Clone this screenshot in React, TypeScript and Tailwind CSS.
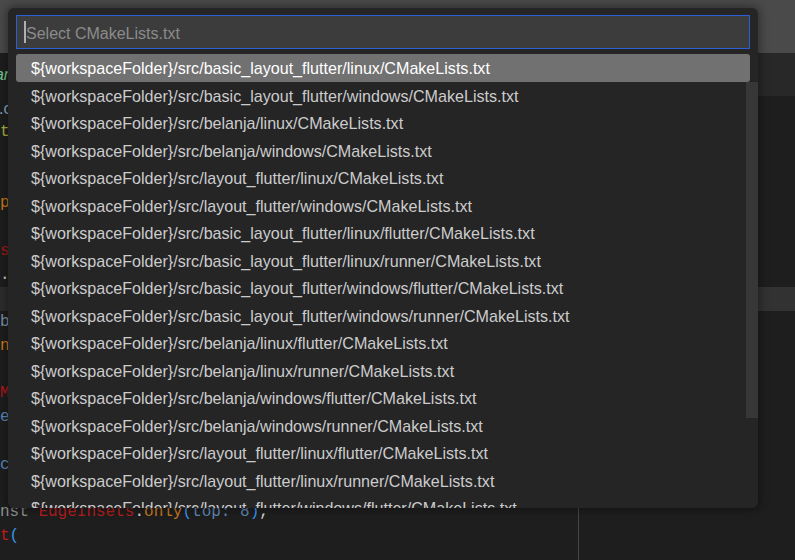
import React from "react";

const items = [
  "${workspaceFolder}/src/basic_layout_flutter/linux/CMakeLists.txt",
  "${workspaceFolder}/src/basic_layout_flutter/windows/CMakeLists.txt",
  "${workspaceFolder}/src/belanja/linux/CMakeLists.txt",
  "${workspaceFolder}/src/belanja/windows/CMakeLists.txt",
  "${workspaceFolder}/src/layout_flutter/linux/CMakeLists.txt",
  "${workspaceFolder}/src/layout_flutter/windows/CMakeLists.txt",
  "${workspaceFolder}/src/basic_layout_flutter/linux/flutter/CMakeLists.txt",
  "${workspaceFolder}/src/basic_layout_flutter/linux/runner/CMakeLists.txt",
  "${workspaceFolder}/src/basic_layout_flutter/windows/flutter/CMakeLists.txt",
  "${workspaceFolder}/src/basic_layout_flutter/windows/runner/CMakeLists.txt",
  "${workspaceFolder}/src/belanja/linux/flutter/CMakeLists.txt",
  "${workspaceFolder}/src/belanja/linux/runner/CMakeLists.txt",
  "${workspaceFolder}/src/belanja/windows/flutter/CMakeLists.txt",
  "${workspaceFolder}/src/belanja/windows/runner/CMakeLists.txt",
  "${workspaceFolder}/src/layout_flutter/linux/flutter/CMakeLists.txt",
  "${workspaceFolder}/src/layout_flutter/linux/runner/CMakeLists.txt",
  "${workspaceFolder}/src/layout_flutter/windows/flutter/CMakeLists.txt",
];

type Seg = { t: string; c: string };

const leftLines: Seg[][] = [
  [{ t: "t", c: "text-[#a9b340]" }],
  [],
  [],
  [{ t: "p", c: "text-[#cc7a1a]" }],
  [],
  [{ t: "s", c: "text-[#a8181b]" }],
  [{ t: ".", c: "text-[#cccccc]" }],
  [],
  [{ t: "b", c: "text-[#7f93a8]" }],
  [{ t: "n", c: "text-[#d07a1a]" }],
  [],
  [{ t: "M", c: "text-[#b8171c]" }],
  [{ t: "e", c: "text-[#5d88b8]" }],
  [],
  [{ t: "c", c: "text-[#5d88b8]" }],
  [],
  [
    { t: "nst ", c: "text-[#8f8f8f]" },
    { t: "EdgeInsets", c: "text-[#b81c1c]" },
    { t: ".", c: "text-[#d4d4d4]" },
    { t: "only", c: "text-[#c97a1f]" },
    { t: "(", c: "text-[#3b95ea]" },
    { t: "top: 8", c: "text-[#5e87b3]" },
    { t: ")", c: "text-[#3b95ea]" },
    { t: ",", c: "text-[#d4d4d4]" },
  ],
  [
    { t: "t", c: "text-[#b81c1c]" },
    { t: "(", c: "text-[#3b95ea]" },
  ],
  [],
];

function CodeLines({ lines, band }: { lines: Seg[][]; band: string }) {
  return (
    <div className="shrink-0 font-['Liberation_Mono',monospace] text-[16px] leading-[23.75px]">
      {lines.map((segs, i) => (
        <div
          key={i}
          className={`h-[23.75px] whitespace-pre ${i === 7 ? band : ""}`}
        >
          {segs.map((s, j) => (
            <span key={j} className={s.c}>
              {s.t}
            </span>
          ))}
        </div>
      ))}
    </div>
  );
}

export default function App() {
  const empty: Seg[][] = Array.from({ length: 19 }, () => []);
  return (
    <div className="relative w-[795px] h-[560px] overflow-hidden bg-[#1e1e1e] font-['Liberation_Sans',sans-serif]">
      <div className="h-[53px] bg-[#4a4a4a]" />
      <div className="flex h-[507px] overflow-hidden">
        <div className="w-[579px] shrink-0 border-r border-[#454545] flex flex-col overflow-hidden">
          <div className="h-[43px] shrink-0 flex items-center overflow-hidden">
            <span className="ml-[-14px] italic text-[16px] text-[#73c991]">dart</span>
          </div>
          <div className="h-[25px] shrink-0 flex items-center overflow-hidden">
            <span className="ml-[-1px] text-[16px] text-[#8fa8c8]">.c</span>
          </div>
          <CodeLines lines={leftLines} band="bg-[#2d2d2d]" />
        </div>
        <div className="flex-1 flex flex-col overflow-hidden">
          <div className="h-[43px] shrink-0 bg-[#282828]" />
          <div className="h-[25px] shrink-0" />
          <CodeLines lines={empty} band="bg-[#323232]" />
        </div>
      </div>

      <div className="absolute left-[8px] top-[8px] w-[750px] h-[500px] rounded-[6px] bg-[#252526] overflow-hidden shadow-[0_0_8px_2px_rgba(0,0,0,0.36)] px-2 pt-[7px]">
        <div className="relative h-[34px] border border-[#2c5fd4] bg-[#3c3c3c] flex items-center pl-[9px] pt-[3px]">
          <span className="absolute left-[7px] top-[5px] w-[1.5px] h-[22px] bg-[#b0b0b0]" />
          <span className="text-[16px] text-[#8b8b8b]">Select CMakeLists.txt</span>
        </div>
        <div className="absolute right-0 top-[74px] w-[12px] h-[336px] bg-[#373737]" />
        <div className="relative mt-[5px]">
          {items.map((it, i) => (
            <div
              key={i}
              className={`h-[27.5px] flex items-center pl-[15px] pt-[1px] text-[16.1px] whitespace-nowrap ${
                i === 0 ? "bg-[#717171] rounded-[3px] text-white" : "text-[#cccccc]"
              }`}
            >
              {it}
            </div>
          ))}
        </div>
      </div>
    </div>
  );
}
